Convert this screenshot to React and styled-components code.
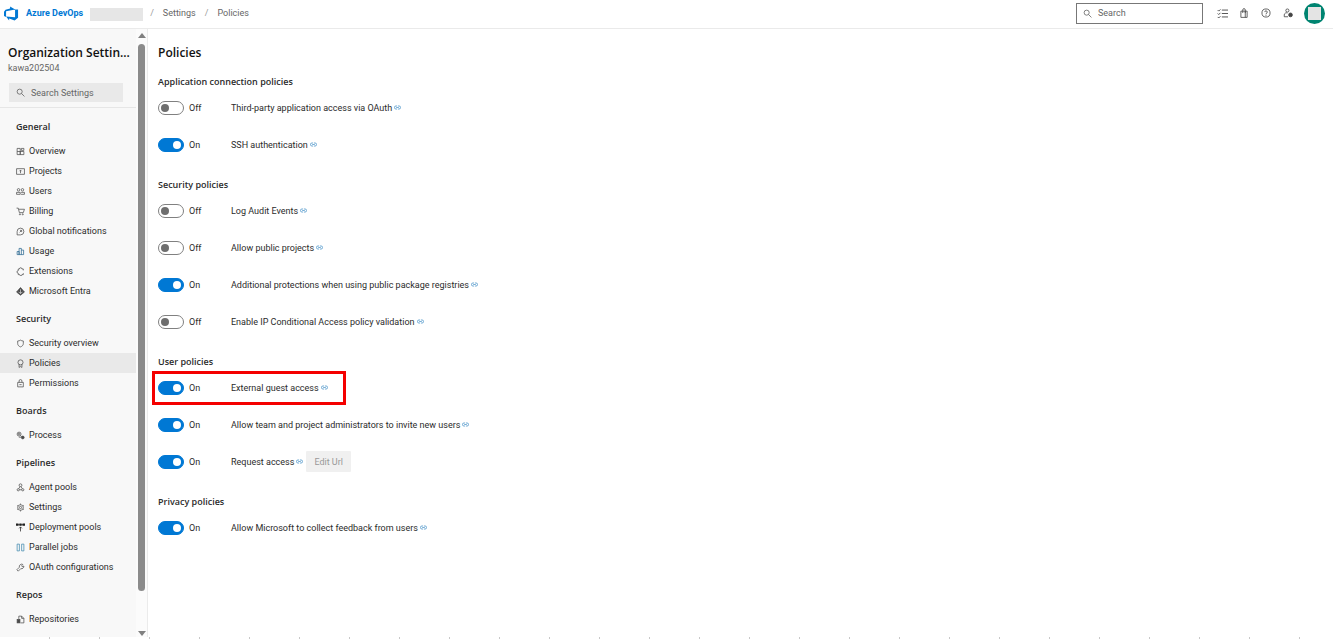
import React from "react";
import styled, { createGlobalStyle } from "styled-components";

const GlobalStyle = createGlobalStyle`
* { box-sizing: border-box; }
body {
  margin: 0;
  background: #fff;
  color: #2b2b2b;
  font-family: Roboto, "Open Sans", sans-serif;
  font-size: 9px;
}
button, input { font: inherit; color: inherit; }
a { color: inherit; text-decoration: none; }
h1, h2, h3, p { margin: 0; padding: 0; font-size: inherit; }
`;

const Page = styled.div`
  display: flex;
  flex-direction: column;
  height: 100vh;
  overflow: hidden;
`;

const Header = styled.header`
  display: flex;
  align-items: center;
  flex: none;
  height: 29px;
  padding: 0 8px 2px 4px;
  border-bottom: 1px solid #eaeaea;
`;

const Brand = styled.a`
  display: flex;
  align-items: center;
  gap: 7px;
  color: #0078d4;
  font-weight: 700;
`;

const OrgMask = styled.span`
  width: 53px;
  height: 13px;
  margin: 3px 7px 0;
  background: #e6e6e6;
`;

const Crumbs = styled.nav`
  display: flex;
  gap: 9px;
  color: #666;
`;

const Slash = styled.span`
  color: #999;
`;

const HeaderSearch = styled.label`
  display: flex;
  align-items: center;
  gap: 6px;
  width: 127px;
  height: 21px;
  margin-left: auto;
  padding: 0 6px;
  border: 1px solid #777;
  color: #555;
`;

const SearchInput = styled.input`
  flex: 1;
  min-width: 0;
  padding: 0;
  border: 0;
  outline: 0;
  background: transparent;
  &::placeholder { color: #666; opacity: 1; }
`;

const HeaderIcons = styled.div`
  display: flex;
  align-items: center;
  gap: 10px;
  margin: 0 10px 0 13px;
`;

const IconButton = styled.button`
  display: flex;
  justify-content: center;
  width: 12px;
  padding: 0;
  border: 0;
  background: none;
  color: #444;
`;

const Avatar = styled.button`
  display: grid;
  place-items: center;
  width: 21px;
  height: 21px;
  padding: 0;
  border: 0;
  border-radius: 50%;
  background: #008471;
  &::before {
    content: "";
    width: 13px;
    height: 13px;
    background: #e4e4e4;
  }
`;

const Body = styled.div`
  display: flex;
  flex: 1;
  min-height: 0;
`;

const Sidebar = styled.aside`
  width: 136px;
  flex: none;
  overflow: hidden;
  background: #f8f8f8;
`;

const SidebarHead = styled.div`
  padding: 15px 6px 5px 8px;
  border-bottom: 1px solid #e6e6e6;
`;

const Title = styled.h1`
  font-family: "Open Sans", sans-serif;
  font-size: 12px;
  line-height: 18px;
  font-weight: 600;
  white-space: nowrap;
  color: #111;
`;

const OrgName = styled.p`
  line-height: 12px;
  color: #666;
`;

const SidebarSearch = styled.label`
  display: flex;
  align-items: center;
  gap: 6px;
  width: 114px;
  height: 19px;
  margin: 9px 0 0 1px;
  padding: 0 7px;
  background: #e9e9e9;
  color: #555;
`;

const NavGroup = styled.section`
  padding-top: 4px;
  &:first-of-type { padding-top: 5px; }
`;

const NavHeading = styled.h2`
  height: 28px;
  padding: 4px 16px 0;
  font-family: "Open Sans", sans-serif;
  font-weight: 600;
  line-height: 20px;
`;

const NavItem = styled.a`
  display: flex;
  align-items: center;
  gap: 4px;
  height: 20px;
  padding-left: 16px;
  white-space: nowrap;
  background: ${(p) => (p.$active ? "#e9e9e9" : "transparent")};
`;

const Scrollbar = styled.div`
  display: flex;
  flex-direction: column;
  align-items: center;
  width: 12px;
  flex: none;
  padding: 4px 0 1px;
  background: #fbfbfb;
  border-right: 1px solid #ebebeb;
`;

const Arrow = styled.span`
  border: 4px solid transparent;
  border-top-width: ${(p) => (p.$up ? 0 : "5px")};
  border-bottom-width: ${(p) => (p.$up ? "5px" : 0)};
  border-top-color: ${(p) => (p.$up ? "transparent" : "#808080")};
  border-bottom-color: ${(p) => (p.$up ? "#808080" : "transparent")};
`;

const Track = styled.div`
  flex: 1;
  padding: 6px 0 40px;
`;

const Thumb = styled.div`
  width: 7px;
  height: 100%;
  border-radius: 4px;
  background: #8b8b8b;
`;

const Main = styled.main`
  flex: 1;
  min-width: 0;
  padding: 15px 10px;
`;

const Section = styled.section`
  padding-top: 13px;
  & + & { padding-top: 15px; }
`;

const SectionHeading = styled.h2`
  font-family: "Open Sans", sans-serif;
  font-weight: 600;
  line-height: 14px;
`;

const Row = styled.div`
  position: relative;
  display: flex;
  align-items: center;
  width: fit-content;
  height: 37px;
`;

const Highlight = styled.div`
  position: absolute;
  inset: 2px -18px 1px -6px;
  border: 3px solid #f40000;
  pointer-events: none;
`;

const SwitchLabel = styled.label`
  display: flex;
  align-items: center;
  gap: 5px;
  width: 73px;
`;

const Switch = styled.input`
  appearance: none;
  display: flex;
  align-items: center;
  width: 26px;
  height: 14px;
  margin: 0;
  padding: 0 2px;
  border: 1px solid #808080;
  border-radius: 7px;
  background: #fff;
  &::before {
    content: "";
    width: 8px;
    height: 8px;
    border-radius: 50%;
    background: #6e6e6e;
  }
  &:checked {
    justify-content: flex-end;
    border-color: #0078d4;
    background: #0078d4;
  }
  &:checked::before { background: #fff; }
`;

const PolicyLink = styled.a`
  display: flex;
  margin-left: 2px;
  color: #3b8bc4;
`;

const EditButton = styled.button`
  height: 21px;
  margin-left: 3px;
  padding: 0 8px;
  border: 0;
  border-radius: 1px;
  background: #f0f0f0;
  color: #999;
`;

const Ruler = styled.div`
  flex: none;
  height: 2px;
  background: repeating-linear-gradient(90deg, #fff 0 49px, #c8c8c8 49px 50px);
`;

const shapes = {
  search: <><circle cx="6.5" cy="6.5" r="4.5" /><path d="M10 10l5 5" /></>,
  overview: <path d="M2 2.500h5.500v11H2zM2 8h12M7.500 8v5.500H14V8M9.500 2.500H14V6H9.500z" />,
  projects: <><path d="M1 3h14v10H1z" /><path d="M8 11V6M6 7.500L8 5.500l2 2" /></>,
  users: <><circle cx="4.5" cy="5" r="2.2" /><circle cx="11.5" cy="5" r="2.2" /><path d="M1 13V9.500h6.500V13zM9 9.500h6V13H9" /></>,
  billing: <><path d="M1 2h3l2 8h7l2-6H5" /><circle cx="7" cy="13" r="1" /><circle cx="12" cy="13" r="1" /></>,
  notifications: <><path d="M2 14v-6a6 6 0 1 1 6 6z" /><path d="M6.500 9.500l3-3M7 6h3v3" /></>,
  usage: <path d="M2 13.500V8h3.500v5.500M5.500 13.500V2.500h4v11M9.500 5.500H13.500v8H2" />,
  extensions: <path d="M13 6V3.500h-2.500a2.200 2.200 0 0 0-4.400 0H4v3a2.200 2.200 0 0 0 0 4.500v2.500h2.500a2 2 0 0 0 4 0H13V11" />,
  entra: <><path d="M8 1l7 8-7 5.500L1 9z" fill="currentColor" /><path d="M8 4v8M4.500 9L8 11l3.500-2" stroke="#f8f8f8" strokeWidth="1" /></>,
  shield: <path d="M3 3.500c2 0 3.500-.5 5-1.500 1.500 1 3 1.500 5 1.500V8c0 3-2 5-5 6-3-1-5-3-5-6z" />,
  policies: <><circle cx="8" cy="6" r="4.500" /><path d="M5.500 9.500V15L8 13.500l2.500 1.500V9.500" /></>,
  permissions: <path d="M3 6h10v8H3zM5.500 6V3.500a2.500 2.500 0 0 1 5 0V6M6 10h4" />,
  process: <><circle cx="5.500" cy="5.500" r="3.500" /><circle cx="5.500" cy="5.500" r="1.500" /><circle cx="12" cy="11.500" r="2.500" fill="currentColor" /><path d="M8 8l2 2M5 11h4" /></>,
  agents: <><circle cx="8" cy="4" r="2.500" /><circle cx="4" cy="12" r="2" /><circle cx="12" cy="12" r="2" /><path d="M7 6.500L5 10M9 6.500l2 3.500M6 12h4" /></>,
  settings: <><circle cx="8" cy="8" r="5" /><circle cx="8" cy="8" r="2" /><path d="M8 1v2M8 13v2M2 4.500l1.700 1M12.300 10.500l1.700 1M2 11.500l1.700-1M12.300 5.500l1.700-1" /></>,
  deployment: <><path d="M0 1h4.500v4H0zM6 1h4v4H6zM11.500 1H16v4h-4.500z" fill="currentColor" stroke="none" /><path d="M8 15V7M5.500 9.500L8 7l2.500 2.500M2 3h12" /></>,
  parallel: <path d="M2 2h4v12H2zM10 2h4v12h-4z" />,
  oauth: <path d="M6 7.500A4.300 4.300 0 0 1 12 2.500L10 5l1 1.500 3-1A4.300 4.300 0 0 1 8.500 10L4 14.500 1.500 12z" />,
  repos: <><path d="M5 7V2h5l4 4v8H8M10 2v4h4" /><rect x="2" y="8" width="5" height="6" fill="currentColor" /></>,
  list: <path d="M1 3l1.500 1.500L5 2M1 8l1.500 1.500L5 7M1 13l1.500 1.500L5 12M7 3h9M7 8h9M7 13h9" />,
  bag: <path d="M3 5h10v10H3zM6 8V3a2 2 0 0 1 4 0v5M10 5v10" />,
  help: <><circle cx="8" cy="8" r="6.500" /><path d="M6 6.500a2 2 0 1 1 2.500 2L8 10M8 11v1.500" /></>,
  userSettings: <><circle cx="7" cy="4" r="2.500" /><path d="M8 14H2v-3a3.500 3.500 0 0 1 5-3" /><circle cx="12" cy="11" r="3" fill="currentColor" /></>,
  link: <path d="M7 4.500H4.500a3.500 3.500 0 0 0 0 7H7M9 4.500h2.500a3.500 3.500 0 0 1 0 7H9M5 8h6" strokeWidth="1.600" />,
};

function Icon({ name, size = 9, color = "currentColor" }) {
  return (
    <svg width={size} height={size} viewBox="0 0 16 16" fill="none" stroke={color} color={color} strokeWidth="1.3" aria-hidden="true">
      {shapes[name]}
    </svg>
  );
}

const nav = [
  ["General", [
    ["Overview", "overview"],
    ["Projects", "projects"],
    ["Users", "users"],
    ["Billing", "billing"],
    ["Global notifications", "notifications"],
    ["Usage", "usage", "#27668f"],
    ["Extensions", "extensions"],
    ["Microsoft Entra", "entra"],
  ]],
  ["Security", [
    ["Security overview", "shield"],
    ["Policies", "policies"],
    ["Permissions", "permissions"],
  ]],
  ["Boards", [["Process", "process"]]],
  ["Pipelines", [
    ["Agent pools", "agents"],
    ["Settings", "settings"],
    ["Deployment pools", "deployment", "#222"],
    ["Parallel jobs", "parallel", "#3d86ad"],
    ["OAuth configurations", "oauth"],
  ]],
  ["Repos", [["Repositories", "repos"]]],
];

const policies = [
  ["Application connection policies", [
    { text: "Third-party application access via OAuth" },
    { text: "SSH authentication", on: true },
  ]],
  ["Security policies", [
    { text: "Log Audit Events" },
    { text: "Allow public projects" },
    { text: "Additional protections when using public package registries", on: true },
    { text: "Enable IP Conditional Access policy validation" },
  ]],
  ["User policies", [
    { text: "External guest access", on: true, highlight: true },
    { text: "Allow team and project administrators to invite new users", on: true },
    { text: "Request access", on: true, edit: true },
  ]],
  ["Privacy policies", [
    { text: "Allow Microsoft to collect feedback from users", on: true },
  ]],
];

function PolicyRow({ policy }) {
  const [on, setOn] = React.useState(!!policy.on);
  return (
    <Row>
      <SwitchLabel>
        <Switch
          type="checkbox"
          role="switch"
          aria-label={policy.text}
          checked={on}
          onChange={() => setOn(!on)}
        />
        {on ? "On" : "Off"}
      </SwitchLabel>
      <span>{policy.text}</span>
      <PolicyLink href="#" aria-label="Learn more"><Icon name="link" size={7} /></PolicyLink>
      {policy.edit && <EditButton disabled>Edit Url</EditButton>}
      {policy.highlight && <Highlight />}
    </Row>
  );
}

function App() {
  return (
    <Page>
      <GlobalStyle />
      <Header>
        <Brand href="#">
          <svg width="15" height="15" viewBox="0 0 16 16" fill="#0078d4" aria-hidden="true">
            <path fillRule="evenodd" d="M15 3.600v9L11.300 15.500 5.500 13.400v2.100L2.200 11.200l9.600.8V3.700zM11.900 3.700L6.500.5v2.200L1.600 4.100 0 6.100v4.600l2.200 1V5.500z" />
          </svg>
          Azure DevOps
        </Brand>
        <OrgMask />
        <Crumbs>
          <Slash>/</Slash>
          <a href="#">Settings</a>
          <Slash>/</Slash>
          <a href="#">Policies</a>
        </Crumbs>
        <HeaderSearch>
          <Icon name="search" />
          <SearchInput type="text" placeholder="Search" aria-label="Search" />
        </HeaderSearch>
        <HeaderIcons>
          <IconButton aria-label="Work items"><Icon name="list" size={11} /></IconButton>
          <IconButton aria-label="Marketplace"><Icon name="bag" size={10} /></IconButton>
          <IconButton aria-label="Help"><Icon name="help" size={10} /></IconButton>
          <IconButton aria-label="User settings"><Icon name="userSettings" size={10} /></IconButton>
        </HeaderIcons>
        <Avatar aria-label="Account" />
      </Header>
      <Body>
        <Sidebar>
          <SidebarHead>
            <Title>Organization Settin...</Title>
            <OrgName>kawa202504</OrgName>
            <SidebarSearch>
              <Icon name="search" />
              <SearchInput type="text" placeholder="Search Settings" aria-label="Search Settings" />
            </SidebarSearch>
          </SidebarHead>
          {nav.map(([heading, items]) => (
            <NavGroup key={heading}>
              <NavHeading>{heading}</NavHeading>
              {items.map(([label, icon, color]) => (
                <NavItem key={label} href="#" $active={label === "Policies"}>
                  <Icon name={icon} color={color || "#4a4a4a"} />
                  {label}
                </NavItem>
              ))}
            </NavGroup>
          ))}
        </Sidebar>
        <Scrollbar>
          <Arrow $up />
          <Track><Thumb /></Track>
          <Arrow />
        </Scrollbar>
        <Main>
          <Title as="h2">Policies</Title>
          {policies.map(([heading, rows]) => (
            <Section key={heading}>
              <SectionHeading>{heading}</SectionHeading>
              {rows.map((policy) => (
                <PolicyRow key={policy.text} policy={policy} />
              ))}
            </Section>
          ))}
        </Main>
      </Body>
      <Ruler />
    </Page>
  );
}

export default App;
